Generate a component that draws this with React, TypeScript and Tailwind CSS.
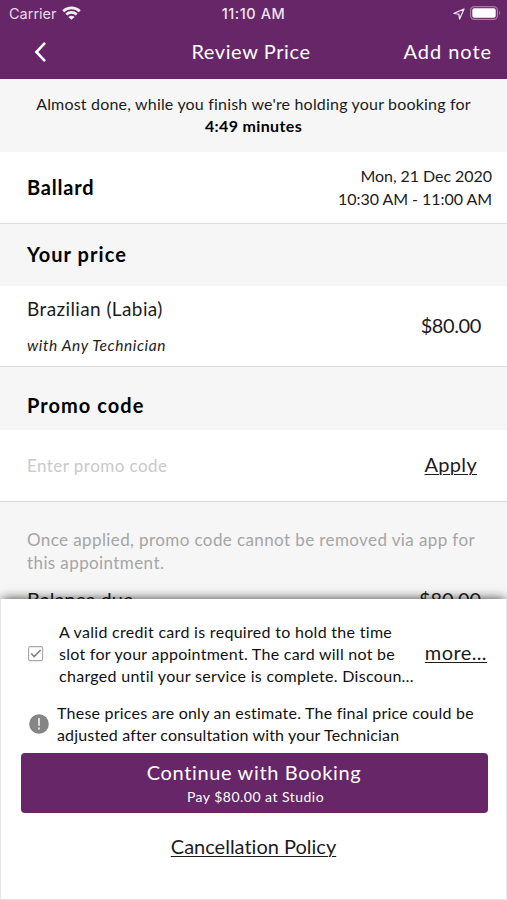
import type { ReactNode } from 'react'

function StatusBar() {
  return (
    <div className="flex h-[27px] items-center px-[9px] font-['Inter'] text-[14px] leading-[27px]">
      <div className="flex flex-1 items-center gap-[6px]">
        <span className="text-[14.5px] text-[#e9d9e9]">Carrier</span>
        <svg className="-mt-[2px] -ml-px" width="19" height="14" viewBox="0 0 19 14" fill="none" stroke="#f4ecf4" strokeWidth="2.6">
          <path d="M1.2 5.2C5.8 0.7 13.2 0.7 17.8 5.2" />
          <path d="M4.3 8.5C7.2 5.7 11.8 5.7 14.7 8.5" />
          <path d="M9.5 13.8L6.4 10.9C8.2 9.3 10.8 9.3 12.6 10.9Z" fill="#f4ecf4" stroke="none" />
        </svg>
      </div>
      <span className="text-[14.5px] font-medium tracking-[0.55px] text-[#efe3ef]">11:10 AM</span>
      <div className="flex flex-1 items-center justify-end gap-[5px]">
        <svg width="12" height="12" viewBox="0 0 12 12" fill="none" stroke="#efe3ef" strokeWidth="1.3" strokeLinejoin="round">
          <path d="M11 1L1 5.4L5.8 6.2L6.6 11Z" />
        </svg>
        <svg className="-mt-[1px] -mr-[3px]" width="31" height="14" viewBox="0 0 31 14">
          <rect x="0.6" y="0.6" width="26.8" height="12.8" rx="3.6" fill="none" stroke="#a67ca5" strokeWidth="1.2" />
          <rect x="2.3" y="2.3" width="23.4" height="9.4" rx="2" fill="#fff" />
          <path d="M29 4.8C30.2 5.4 30.2 8.6 29 9.2Z" fill="#a67ca5" />
        </svg>
      </div>
    </div>
  )
}

function SectionTitle({ children }: { children: ReactNode }) {
  return (
    <h2 className="pl-[27px] text-[20px] leading-[26px] font-bold tracking-[1.05px] text-black">
      {children}
    </h2>
  )
}

export default function App() {
  return (
    <div className="flex h-[900px] w-[507px] flex-col overflow-hidden bg-[#f6f6f6] font-['Lato','Liberation_Sans',sans-serif] text-[#1c1c1c] [font-variant-ligatures:none]">
      <header className="h-[79px] shrink-0 bg-[#672667] text-white">
        <StatusBar />
        <div className="grid h-[48px] grid-cols-[1fr_auto_1fr] items-center text-[20px]">
          <button className="ml-[33px] w-[14px] pt-[2px]">
            <svg width="14" height="22" viewBox="0 0 14 22" fill="none" stroke="#fff" strokeWidth="2.6">
              <path d="M12 1.8L3.4 11L12 20.2" />
            </svg>
          </button>
          <h1 className="mr-[5px] tracking-[0.6px]">Review Price</h1>
          <button className="pr-[15px] text-right tracking-[0.95px]">Add note</button>
        </div>
      </header>

      <main className="h-[520px] shrink-0 overflow-hidden">
        <div className="h-[73px] pt-[14px] text-center text-[16px] leading-[22px]">
          <p className="tracking-[0.19px]">Almost done, while you finish we're holding your booking for</p>
          <p className="font-bold tracking-[0.35px] text-black">4:49 minutes</p>
        </div>

        <section className="flex h-[72px] items-center justify-between border-b border-[#dcdcdc] bg-white pr-[15px] pb-[2px] pl-[27px]">
          <h2 className="text-[20px] font-bold tracking-[0.8px] text-black">Ballard</h2>
          <div className="text-right text-[16px] leading-[23px] tracking-[-0.05px]">
            <p>Mon, 21 Dec 2020</p>
            <p>10:30 AM - 11:00 AM</p>
          </div>
        </section>

        <div className="h-[62px] pt-[17px]">
          <SectionTitle>Your price</SectionTitle>
        </div>
        <section className="flex h-[81px] items-center justify-between border-b border-[#dcdcdc] bg-white pr-[26px] pl-[27px]">
          <div className="pt-[2px]">
            <p className="text-[19px] leading-[36px] tracking-[0.4px]">Brazilian (Labia)</p>
            <p className="text-[15.5px] leading-[36px] tracking-[0.6px] italic">with Any Technician</p>
          </div>
          <span className="pb-[2px] text-[20px] tracking-[-0.4px]">$80.00</span>
        </section>

        <div className="h-[63px] pt-[25px]">
          <SectionTitle>Promo code</SectionTitle>
        </div>
        <section className="flex h-[72px] items-center justify-between border-b border-[#d4d4d4] bg-white pr-[30px] pl-[27px]">
          <span className="text-[17px] tracking-[0.45px] text-[#c9c9c9]">Enter promo code</span>
          <button className="pb-[3px] text-[20px] tracking-[0.3px] underline decoration-1 underline-offset-2">Apply</button>
        </section>

        <div className="pt-[26px] pl-[27px] text-[17px] leading-[23px] tracking-[0.4px] text-[#a5a5a5]">
          <p>Once applied, promo code cannot be removed via app for</p>
          <p>this appointment.</p>
        </div>
        <div className="mt-[11px] flex justify-between pr-[26px] pl-[27px] text-[20px] leading-[28px]">
          <span>Balance due</span>
          <span className="tracking-[-0.1px]">$80.00</span>
        </div>
      </main>

      <div className="relative h-[301px] shrink-0 bg-[#e6e6e6] px-px pb-px shadow-[0_-1px_11px_-2px_rgba(0,0,0,0.9)]">
        <section className="h-[300px] bg-white">
          <div className="flex h-[95px] items-start pt-[22px]">
            <svg className="mt-[25px] ml-[27px]" width="16" height="16" viewBox="0 0 16 16" fill="none">
              <rect x="0.6" y="0.6" width="14" height="14" rx="1.5" stroke="#a8a8a8" strokeWidth="1.1" />
              <path d="M3.2 7.5L6.2 10.6L12.6 4" stroke="#808080" strokeWidth="1.7" />
            </svg>
            <div className="ml-[15px] flex-1 text-[16px] leading-[22px] tracking-[0.3px] text-[#111]">
              <p>A valid credit card is required to hold the time</p>
              <p className="tracking-[0.27px]">slot for your appointment. The card will not be</p>
              <p>charged until your service is complete. Discoun…</p>
            </div>
            <button className="mt-[18px] mr-[19px] text-[20px] leading-[26px] tracking-[0.4px] underline decoration-1 underline-offset-2">more...</button>
          </div>
          <div className="flex h-[58.5px] pt-[8px]">
            <svg className="mt-[12px] ml-[28px]" width="20" height="20" viewBox="0 0 20 20">
              <circle cx="10" cy="10" r="9.8" fill="#858585" />
              <path d="M10 4V11.8M10 13.4V15.6" stroke="#f3f3f3" strokeWidth="1.6" />
            </svg>
            <div className="ml-[8px] text-[16px] leading-[21.5px] text-[#111]">
              <p className="tracking-[0.23px]">These prices are only an estimate. The final price could be</p>
              <p className="tracking-[0.16px]">adjusted after consultation with your Technician</p>
            </div>
          </div>
          <button className="ml-[19.5px] flex h-[60.5px] w-[467px] flex-col items-center rounded-[4px] bg-[#672667] pt-[6.5px] text-white">
            <span className="text-[20px] leading-[27px] tracking-[0.65px]">Continue with Booking</span>
            <span className="ml-[3px] text-[14px] leading-[21px] tracking-[0.48px]">Pay $80.00 at Studio</span>
          </button>
          <div className="pt-[20px] text-center text-[20px] leading-[26px]">
            <a className="underline decoration-1 underline-offset-2">Cancellation Policy</a>
          </div>
        </section>
      </div>
    </div>
  )
}
